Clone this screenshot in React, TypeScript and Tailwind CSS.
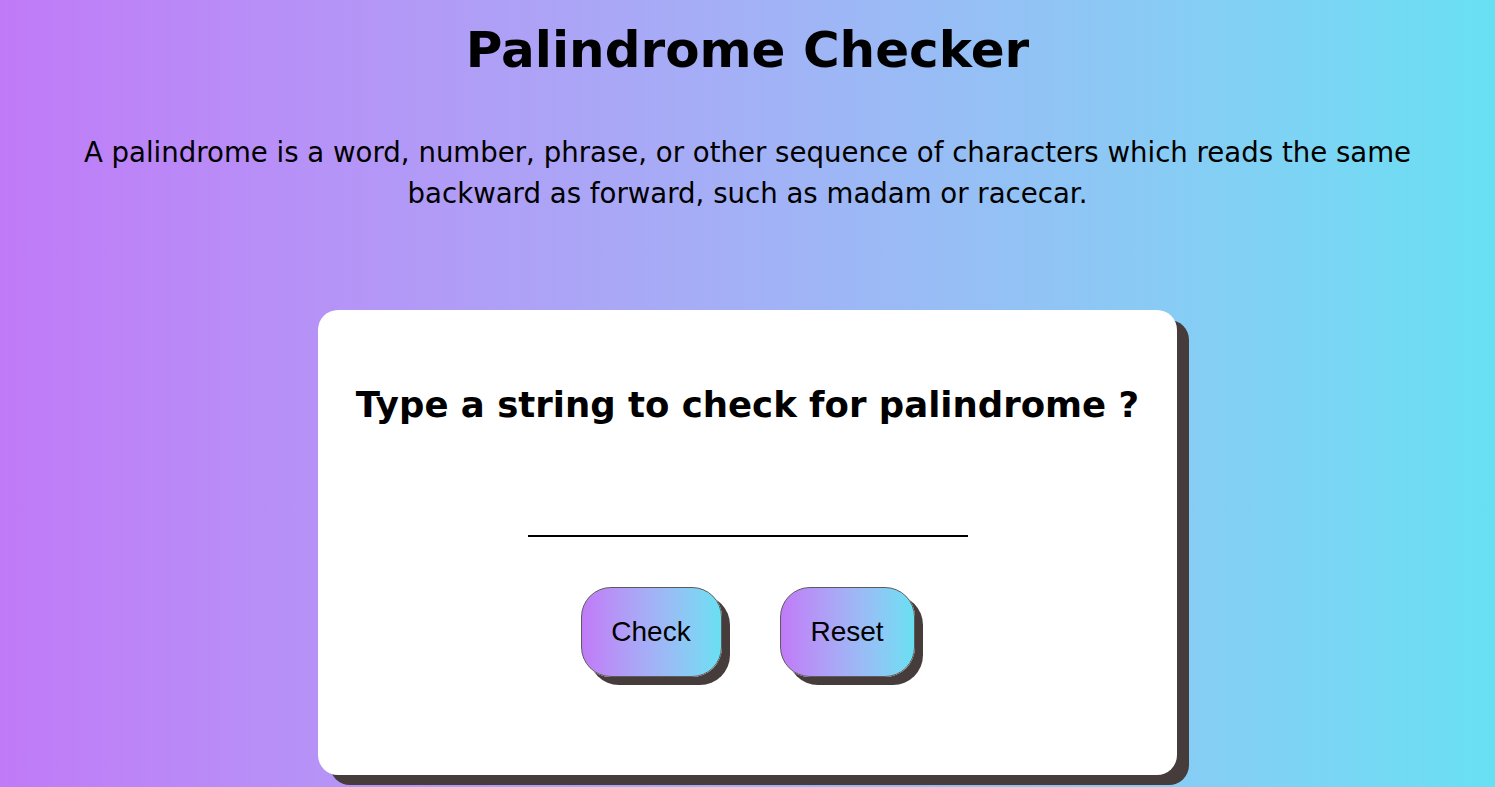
import { useState } from "react";

const comic = "font-['Comic_Sans_MS','DejaVu_Sans',sans-serif]";

export default function App() {
  const [text, setText] = useState("");

  return (
    <div className={`min-h-screen bg-gradient-to-r from-[#c07af7] to-[#67e0f3] text-black ${comic}`}>
      {/* Header */}
      <h1 className="pt-[16px] text-center text-[50px] font-bold leading-[68px]">
        Palindrome Checker
      </h1>
      <p className="mx-auto mt-[48px] max-w-[1370px] text-center text-[27.6px] leading-[41px]">
        A palindrome is a word, number, phrase, or other sequence of characters which reads the same
        backward as forward, such as madam or racecar.
      </p>

      {/* Card */}
      <div className="mx-auto mt-[96px] flex h-[465px] w-[859px] flex-col items-center rounded-[20px] bg-white shadow-[12px_10px_0_#463c3c]">
        <h2 className="mt-[72px] text-[35.5px] font-bold leading-[46px]">
          Type a string to check for palindrome ?
        </h2>

        <input
          value={text}
          onChange={(e) => setText(e.target.value)}
          className="mt-[69px] h-[40px] w-[440px] border-b-2 border-black bg-transparent text-center text-[22px] outline-none"
        />

        <div className="mt-[50px] flex gap-[58px]">
          <button className="h-[90px] w-[141px] rounded-[30px] border border-[#5b5b5b] bg-gradient-to-r from-[#c07af7] to-[#67e0f3] font-['Liberation_Sans',Arial,sans-serif] text-[28px] shadow-[8px_8px_0_#463c3c]">
            Check
          </button>
          <button
            onClick={() => setText("")}
            className="h-[90px] w-[135px] rounded-[30px] border border-[#5b5b5b] bg-gradient-to-r from-[#c07af7] to-[#67e0f3] font-['Liberation_Sans',Arial,sans-serif] text-[28px] shadow-[8px_8px_0_#463c3c]"
          >
            Reset
          </button>
        </div>
      </div>
    </div>
  );
}
